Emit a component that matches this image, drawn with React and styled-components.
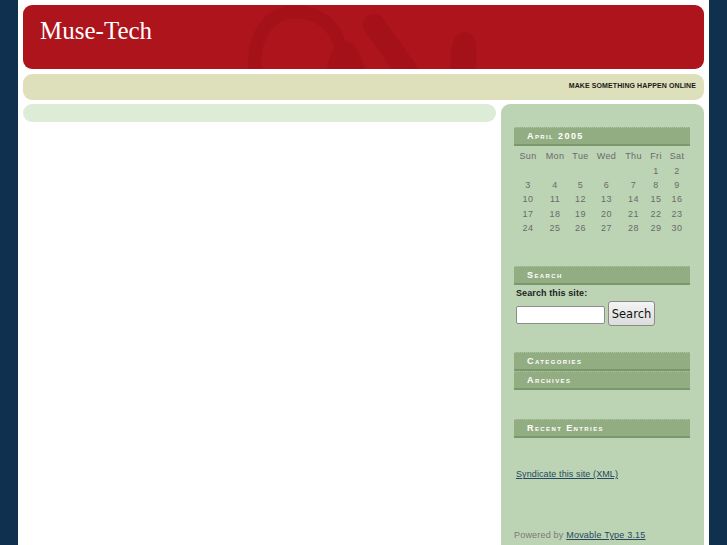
import React from "react";
import styled, { createGlobalStyle } from "styled-components";

const Global = createGlobalStyle`
  html, body { margin: 0; padding: 0; }
  body {
    background: #10304f;
    font-family: "Liberation Sans", Arial, sans-serif;
    overflow: hidden;
  }
`;

const Page = styled.div`
  margin-left: 18px;
  width: 681px;
  min-height: 545px;
  padding: 5px;
  background: #ffffff;
  display: flex;
  flex-direction: column;
  gap: 5px;
`;

const Banner = styled.header`
  position: relative;
  height: 64px;
  border-radius: 9px;
  background: #ae141c;
  overflow: hidden;
  padding: 13px 17px 0;
  box-sizing: border-box;
`;

const Swirl = styled.svg`
  position: absolute;
  left: 0;
  top: 0;
  width: 681px;
  height: 64px;
`;

const Title = styled.h1`
  position: relative;
  margin: 0;
  font-family: "Liberation Serif", "Times New Roman", serif;
  font-weight: normal;
  font-size: 25px;
  line-height: 25px;
  color: #ffffff;
`;

const Tagline = styled.div`
  height: 26px;
  box-sizing: border-box;
  border-radius: 9px;
  background: #dedfbb;
  display: flex;
  align-items: center;
  justify-content: flex-end;
  padding: 0 8px 4px 0;
  font-size: 7px;
  font-weight: bold;
  letter-spacing: 0.1px;
  color: #1a1a1a;
  text-transform: uppercase;
`;

const Body = styled.div`
  display: grid;
  grid-template-columns: 473px 203px;
  gap: 5px;
  flex: 1;
  margin-top: -1px;
`;

const Main = styled.main`
  align-self: start;
  height: 18px;
  border-radius: 9px;
  background: #dcecd7;
`;

const Sidebar = styled.aside`
  background: #bcd4b4;
  border-radius: 9px 9px 0 0;
  padding: 23px 14px 0 13px;
  min-height: 441px;
  display: flex;
  flex-direction: column;
`;

const Module = styled.section`
  margin-bottom: ${(p) => p.$mb || 0}px;
`;

const ModuleHead = styled.h2`
  margin: 0;
  height: 16px;
  background: #93ad83;
  border-top: 1px dotted #adc2a0;
  border-bottom: 2px solid #7b986c;
  padding-left: 13px;
  font-size: 9px;
  line-height: 16px;
  font-weight: bold;
  font-variant: small-caps;
  letter-spacing: 1.4px;
  color: #ffffff;
`;

const Cal = styled.table`
  width: 175px;
  border-collapse: collapse;
  table-layout: fixed;
  margin-top: 3px;
  font-size: 9px;
  line-height: 10px;
  color: #6a6a6a;
  letter-spacing: 0.4px;
  th, td {
    padding: 0;
    height: 14.4px;
    text-align: center;
    font-weight: normal;
  }
`;

const SearchLabel = styled.div`
  margin: 3px 0 0 2px;
  font-size: 9px;
  line-height: 10px;
  font-weight: bold;
  color: #222;
  letter-spacing: 0.1px;
`;

const SearchRow = styled.div`
  display: flex;
  align-items: flex-end;
  gap: 3px;
  margin: 3px 0 0 2px;
`;

const Input = styled.input`
  width: 89px;
  height: 18px;
  box-sizing: border-box;
  border: 1px solid #8c8c8c;
  border-radius: 2px;
  background: #fff;
  padding: 0;
  margin: 0 0 2px;
`;

const Button = styled.button`
  width: 47px;
  height: 25px;
  box-sizing: border-box;
  border: 1px solid #8a8a8a;
  border-radius: 3px;
  background: linear-gradient(#f4f4f4, #dcdcdc);
  font-family: "DejaVu Sans", sans-serif;
  font-size: 11.5px;
  color: #111;
  padding: 0;
  margin: 0;
`;

const Link = styled.a`
  color: #27475f;
  text-decoration: underline;
`;

const Syndicate = styled.div`
  margin: 31px 0 0 2px;
  font-size: 9px;
  line-height: 10px;
  letter-spacing: 0.1px;
`;

const Powered = styled.div`
  margin: 51px 0 0 0;
  font-size: 9px;
  line-height: 10px;
  color: #7a7a7a;
  letter-spacing: 0.2px;
`;

const weeks = [
  ["", "", "", "", "", "1", "2"],
  ["3", "4", "5", "6", "7", "8", "9"],
  ["10", "11", "12", "13", "14", "15", "16"],
  ["17", "18", "19", "20", "21", "22", "23"],
  ["24", "25", "26", "27", "28", "29", "30"],
];
const days = ["Sun", "Mon", "Tue", "Wed", "Thu", "Fri", "Sat"];
const widths = [28, 26, 25, 27, 27, 18, 24];

export default function App() {
  return (
    <>
      <Global />
      <Page>
        <Banner>
          <Swirl viewBox="0 0 681 64">
            <g fill="none" stroke="#a41119" strokeLinecap="round">
              <path d="M232 66 C 229 30, 247 7, 272 7 C 295 7, 312 20, 317 40" strokeWidth="13" />
              <path d="M351 20 L 384 66" strokeWidth="22" />
            </g>
            <g fill="#a41119">
              <path d="M304 64 C 306 50, 312 38, 322 36 C 332 36, 338 50, 342 64 Z" />
              <path d="M428 64 C 426 45, 430 28, 441 27 C 452 26, 456 40, 452 64 Z" />
            </g>
          </Swirl>
          <Title>Muse-Tech</Title>
        </Banner>
        <Tagline>Make something happen online</Tagline>
        <Body>
          <Main />
          <Sidebar>
            <Module $mb={31}>
              <ModuleHead>April 2005</ModuleHead>
              <Cal>
                <colgroup>
                  {widths.map((w, i) => (
                    <col key={i} style={{ width: w }} />
                  ))}
                </colgroup>
                <thead>
                  <tr>
                    {days.map((d) => (
                      <th key={d}>{d}</th>
                    ))}
                  </tr>
                </thead>
                <tbody>
                  {weeks.map((w, i) => (
                    <tr key={i}>
                      {w.map((d, j) => (
                        <td key={j}>{d}</td>
                      ))}
                    </tr>
                  ))}
                </tbody>
              </Cal>
            </Module>
            <Module $mb={26}>
              <ModuleHead>Search</ModuleHead>
              <SearchLabel>Search this site:</SearchLabel>
              <SearchRow>
                <Input type="text" />
                <Button>Search</Button>
              </SearchRow>
            </Module>
            <Module>
              <ModuleHead>Categories</ModuleHead>
            </Module>
            <Module $mb={29}>
              <ModuleHead>Archives</ModuleHead>
            </Module>
            <Module>
              <ModuleHead>Recent Entries</ModuleHead>
            </Module>
            <Syndicate>
              <Link href="#">Syndicate this site (XML)</Link>
            </Syndicate>
            <Powered>
              Powered by <Link href="#">Movable Type 3.15</Link>
            </Powered>
          </Sidebar>
        </Body>
      </Page>
    </>
  );
}
